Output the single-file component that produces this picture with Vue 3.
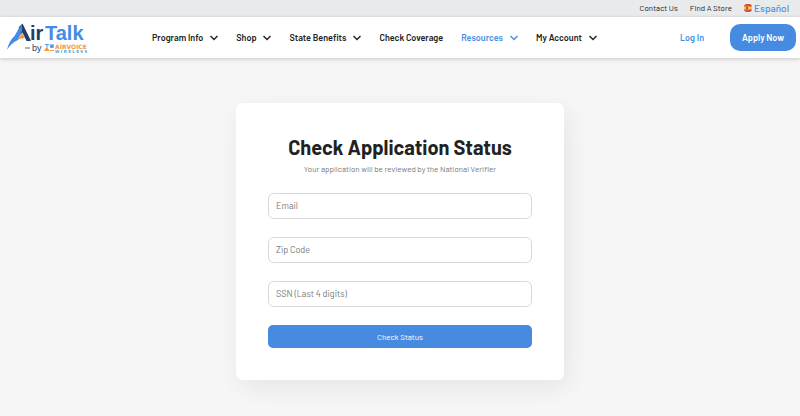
<script setup>
import { reactive } from 'vue'

const navItems = [
  { label: 'Program Info', menu: true },
  { label: 'Shop', menu: true },
  { label: 'State Benefits', menu: true },
  { label: 'Check Coverage', menu: false },
  { label: 'Resources', menu: true, active: true },
  { label: 'My Account', menu: true },
]

const fields = [
  { id: 'email', label: 'Email', type: 'email' },
  { id: 'zip', label: 'Zip Code', type: 'text' },
  { id: 'ssn', label: 'SSN (Last 4 digits)', type: 'text' },
]

const form = reactive({ email: '', zip: '', ssn: '' })
</script>

<template>
  <div class="page">
    <div class="topbar">
      <a href="#">Contact Us</a>
      <a href="#">Find A Store</a>
      <a href="#" class="language">
        <svg class="flag" viewBox="0 0 8 8" aria-hidden="true">
          <rect width="8" height="8" rx="3" fill="#d9473f" />
          <path d="M0 2.500 H8 V5.500 H0 Z" fill="#f6c94a" />
          <rect x="2" y="3" width="2" height="2" fill="#a65a35" />
        </svg>
        <span>Español</span>
      </a>
    </div>

    <header class="header">
      <a href="#" class="logo" aria-label="AirTalk by Airvoice Wireless">
        <svg viewBox="0 0 82 32" aria-hidden="true">
          <path d="M13 5 L16.500 1.500 L25 19 L20.500 19 L16.500 10.500 L12 15 Z" fill="#253c6b" />
          <path d="M16 3 Q12 7 8.500 14 Q3 19 1 28 Q5 21 12 18 L16 9 Z" fill="#438be6" />
          <path d="M11.500 18 L16.500 11 L19 16 Q15 16 11.500 18 Z" fill="#f39a38" />
          <text x="24" y="18" class="logo-air">ir</text>
          <text x="39" y="18" class="logo-talk">Talk</text>
          <path d="M19 26 H24" stroke="#53688d" stroke-width="1" />
          <text x="26" y="29" class="logo-by">by</text>
          <path d="M39 22.500 H43 M41 22.500 V25" stroke="#4c9de1" fill="none" />
          <path d="M38 29 L41 24.500 L43.500 29 Z" fill="#f39a38" />
          <path d="M43.500 22.500 H48 L47.500 26 H44.500 Z" fill="#4c9de1" />
          <path d="M44 28.500 H48" stroke="#f39a38" />
          <text x="49" y="27" class="logo-brand">AIRVOICE</text>
          <text x="49" y="31" class="logo-sub">W I R E L E S S</text>
        </svg>
      </a>

      <nav class="nav" aria-label="Main">
        <a
          v-for="item in navItems"
          :key="item.label"
          href="#"
          :class="{ active: item.active }"
        >
          <span>{{ item.label }}</span>
          <svg v-if="item.menu" class="chevron" viewBox="0 0 8 6" aria-hidden="true">
            <path d="M0.500 1 L4 4.500 L7.500 1" />
          </svg>
        </a>
      </nav>

      <div class="actions">
        <a href="#" class="login">Log In</a>
        <a href="#" class="apply">Apply Now</a>
      </div>
    </header>

    <main class="main">
      <form class="card" @submit.prevent>
        <h1>Check Application Status</h1>
        <p>Your application will be reviewed by the National Verifier</p>
        <div class="fields">
          <input
            v-for="field in fields"
            :id="field.id"
            :key="field.id"
            v-model="form[field.id]"
            :type="field.type"
            :placeholder="field.label"
            :aria-label="field.label"
          />
          <button type="submit">Check Status</button>
        </div>
      </form>
    </main>
  </div>
</template>

<style>
body {
  background: #f6f6f6;
}
</style>

<style scoped>
.page {
  font-family: Barlow, Roboto, sans-serif;
  font-size: 9px;
  color: #222;
}

.page * {
  box-sizing: border-box;
}

a {
  color: inherit;
  text-decoration: none;
  white-space: nowrap;
}

.topbar {
  display: flex;
  align-items: center;
  justify-content: flex-end;
  gap: 12px;
  height: 17px;
  padding: 0 11px 1px;
  background: #e9eaec;
  font-size: 8px;
}

.language {
  display: flex;
  align-items: center;
  gap: 2px;
  color: #4a90e2;
  font-size: 10px;
  font-weight: 500;
}

.flag {
  width: 8px;
  height: 8px;
}

.header {
  position: relative;
  display: flex;
  align-items: center;
  height: 41px;
  padding: 0 4px 0 6px;
  background: #fff;
  box-shadow: 0 1px 4px rgba(0, 0, 0, 0.2);
  font-weight: 600;
}

.logo svg {
  display: block;
  width: 82px;
  height: 32px;
}

.logo-air,
.logo-talk {
  font-family: "Liberation Sans", sans-serif;
  font-size: 20px;
  font-weight: 700;
  fill: #253c6b;
}

.logo-talk {
  fill: #438be6;
}

.logo-by {
  font-family: "Liberation Sans", sans-serif;
  font-size: 9px;
  font-weight: 400;
  fill: #253c6b;
}

.logo-brand {
  font-family: "DejaVu Sans", sans-serif;
  font-size: 6px;
  font-weight: 700;
  fill: #f39a38;
}

.logo-sub {
  font-family: "DejaVu Sans", sans-serif;
  font-size: 4px;
  font-weight: 700;
  fill: #4c9de1;
}

.nav {
  display: flex;
  gap: 18px;
  margin-left: 64px;
}

.nav a {
  display: flex;
  align-items: center;
  gap: 7px;
}

.nav .active {
  color: #4a90e2;
}

.chevron {
  width: 8px;
  height: 6px;
  fill: none;
  stroke: currentColor;
  stroke-width: 1.5;
}

.actions {
  display: flex;
  align-items: center;
  gap: 26px;
  margin-left: auto;
}

.login {
  color: #4a90e2;
}

.apply {
  padding: 0 12px;
  border-radius: 10px;
  background: #478be1;
  color: #fff;
  line-height: 27px;
}

.main {
  display: flex;
  justify-content: center;
  padding: 45px 16px 35px;
}

.card {
  width: 100%;
  max-width: 328px;
  padding: 31px 32px 32px;
  border-radius: 7px;
  background: #fff;
  box-shadow: 4px 8px 24px rgba(0, 0, 0, 0.07);
  text-align: center;
}

h1 {
  margin: 0;
  font-size: 20px;
  line-height: 26px;
  font-weight: 700;
}

p {
  margin: 3px 0 18px;
  color: #777;
  font-size: 8px;
  line-height: 12px;
}

.fields {
  display: flex;
  flex-direction: column;
  gap: 18px;
}

input {
  width: 100%;
  height: 26px;
  padding: 0 7px 1px;
  border: 1px solid #d9d9d9;
  border-radius: 6px;
  background: #fff;
  color: #222;
  font: inherit;
}

input::placeholder {
  color: #777;
  opacity: 1;
}

button {
  height: 23px;
  padding: 0;
  border: 0;
  border-radius: 5px;
  background: #478be1;
  color: #fff;
  font: inherit;
  font-size: 8px;
}
</style>
